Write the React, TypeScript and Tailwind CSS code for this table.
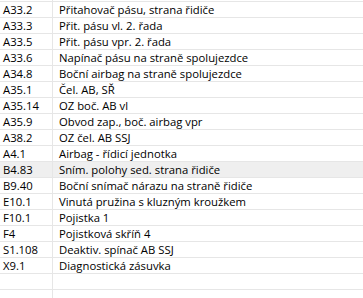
const rows: [string, string][] = [
  ["A33.2", "Přitahovač pásu, strana řidiče"],
  ["A33.3", "Přit. pásu vl. 2. řada"],
  ["A33.5", "Přit. pásu vpr. 2. řada"],
  ["A33.6", "Napínač pásu na straně spolujezdce"],
  ["A34.8", "Boční airbag na straně spolujezdce"],
  ["A35.1", "Čel. AB, SŘ"],
  ["A35.14", "OZ boč. AB vl"],
  ["A35.9", "Obvod zap., boč. airbag vpr"],
  ["A38.2", "OZ čel. AB SSJ"],
  ["A4.1", "Airbag - řídicí jednotka"],
  ["B4.83", "Sním. polohy sed. strana řidiče"],
  ["B9.40", "Boční snímač nárazu na straně řidiče"],
  ["E10.1", "Vinutá pružina s kluzným kroužkem"],
  ["F10.1", "Pojistka 1"],
  ["F4", "Pojistková skříň 4"],
  ["S1.108", "Deaktiv. spínač AB SSJ"],
  ["X9.1", "Diagnostická zásuvka"],
  ["", ""],
  ["", ""],
  ["", ""],
];

export default function App() {
  return (
    <div
      className="w-[363px] h-[298px] overflow-hidden bg-white text-[11.3px] leading-[15px] text-black"
      style={{ fontFamily: '"Open Sans", "Noto Sans", sans-serif' }}
    >
      <div className="flex h-px">
        <div className="w-[52px]" />
        <div className="w-px bg-[#e6e6e6]" />
      </div>
      <div className="border-t border-[#e6e6e6]">
        {rows.map(([code, name], i) => (
          <div
            key={i}
            className={`flex h-[16px] border-b border-[#e6e6e6] ${code === "B4.83" ? "bg-[#efefef]" : ""}`}
          >
            <div className="w-[52px] pl-[3px] whitespace-nowrap">{code}</div>
            <div className="w-px bg-[#e6e6e6]" />
            <div className="flex-1 pl-[6px] whitespace-nowrap">{name}</div>
          </div>
        ))}
      </div>
    </div>
  );
}
